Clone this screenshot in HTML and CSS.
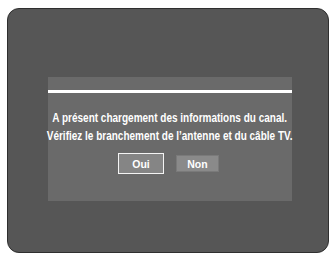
FILE: index.html
```html
<!DOCTYPE html>
<html>
<head>
<meta charset="utf-8">
<link rel="stylesheet" href="styles.css">
</head>
<body>
<div class="frame">
  <div class="panel">
    <div class="rule"></div>
    <div class="msg">
      <span class="line">A présent chargement des informations du canal.</span>
      <span class="line">Vérifiez le branchement de l’antenne et du câble TV.</span>
    </div>
    <div class="buttons">
      <div class="btn btn-active">Oui</div>
      <div class="btn">Non</div>
    </div>
  </div>
</div>
</body>
</html>
```
FILE: styles.css
```css
html, body {
  margin: 0;
  padding: 0;
  background: #ffffff;
}
body {
  width: 331px;
  height: 257px;
  overflow: hidden;
  font-family: "Liberation Sans", Arial, sans-serif;
}
.frame {
  box-sizing: border-box;
  margin: 8px 0 0 7px;
  width: 322px;
  height: 245px;
  border: 1px solid #2f2f2f;
  border-radius: 12px;
  background: #565656;
  padding: 68px 0 0 40px;
}
.panel {
  box-sizing: border-box;
  width: 244px;
  height: 124px;
  background: #6a6a6a;
  padding-top: 13px;
  display: flex;
  flex-direction: column;
}
.rule {
  height: 3px;
  background: #ffffff;
}
.msg {
  margin-top: 16px;
  display: flex;
  flex-direction: column;
  align-items: center;
}
.line {
  display: block;
  white-space: nowrap;
  font-weight: bold;
  font-size: 12.5px;
  line-height: 18px;
  color: #ffffff;
  transform: scaleX(0.8);
}
.buttons {
  margin-top: 8px;
  display: flex;
  justify-content: center;
  align-items: center;
  gap: 12px;
  padding-right: 3px;
}
.btn {
  box-sizing: border-box;
  width: 43px;
  height: 17px;
  background: #8a8a8a;
  border: 1px solid #7a7a7a;
  color: #ffffff;
  font-weight: bold;
  font-size: 10.5px;
  display: flex;
  align-items: center;
  justify-content: center;
}
.btn-active {
  width: 46px;
  height: 21px;
  border: 1.5px solid #f4f4f4;
  background: #858585;
}
```
